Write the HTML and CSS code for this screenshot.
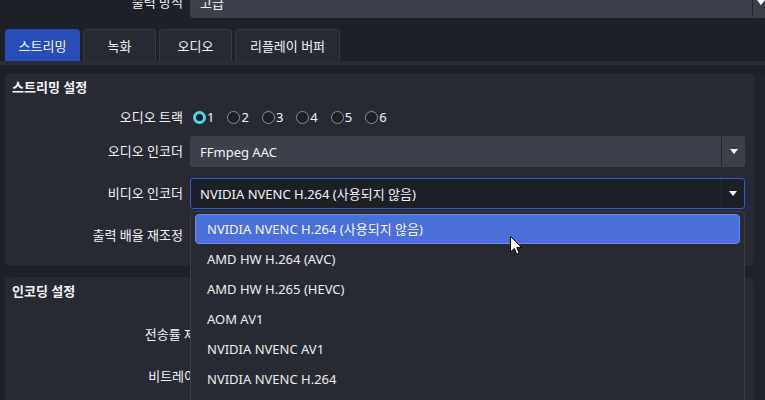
FILE: index.html
```html
<!DOCTYPE html>
<html lang="ko">
<head>
<meta charset="utf-8">
<link rel="stylesheet" href="styles.css">
</head>
<body>
<div class="page">
  <div class="top-row">
    <div class="label">출력 방식</div>
    <div class="combo combo-top"><span class="combo-text">고급</span><span class="combo-btn"><span class="arrow"></span></span></div>
  </div>
  <div class="tabs">
    <div class="tab active">스트리밍</div>
    <div class="tab">녹화</div>
    <div class="tab">오디오</div>
    <div class="tab wide">리플레이 버퍼</div>
  </div>
  <div class="tab-line"></div>
  <div class="content">
    <div class="panels">
      <div class="panel p1">
        <div class="panel-title">스트리밍 설정</div>
        <div class="row radio-row">
          <div class="label">오디오 트랙</div>
          <div class="radios">
            <span class="radio checked"></span><span class="rnum">1</span>
            <span class="radio"></span><span class="rnum">2</span>
            <span class="radio"></span><span class="rnum">3</span>
            <span class="radio"></span><span class="rnum">4</span>
            <span class="radio"></span><span class="rnum">5</span>
            <span class="radio"></span><span class="rnum">6</span>
          </div>
        </div>
        <div class="row">
          <div class="label">오디오 인코더</div>
          <div class="combo"><span class="combo-text">FFmpeg AAC</span><span class="combo-btn"><span class="arrow"></span></span></div>
        </div>
        <div class="row">
          <div class="label">비디오 인코더</div>
          <div class="combo focused"><span class="combo-text">NVIDIA NVENC H.264 (사용되지 않음)</span><span class="combo-btn"><span class="arrow"></span></span></div>
        </div>
        <div class="row">
          <div class="label">출력 배율 재조정</div>
          <div class="combo"><span class="combo-text"></span></div>
        </div>
      </div>
      <div class="panel p2">
        <div class="panel-title">인코딩 설정</div>
        <div class="row first">
          <div class="label">전송률 제어</div>
          <div class="combo"><span class="combo-text"></span></div>
        </div>
        <div class="row">
          <div class="label">비트레이트</div>
          <div class="combo"><span class="combo-text"></span></div>
        </div>
      </div>
    </div>
    <div class="scrollbar"></div>
  </div>

  <div class="popup">
    <div class="item selected">NVIDIA NVENC H.264 (사용되지 않음)</div>
    <div class="item">AMD HW H.264 (AVC)</div>
    <div class="item">AMD HW H.265 (HEVC)</div>
    <div class="item">AOM AV1</div>
    <div class="item">NVIDIA NVENC AV1</div>
    <div class="item">NVIDIA NVENC H.264</div>
    <div class="item">NVIDIA NVENC H.265</div>
  </div>

  <svg class="cursor" width="13" height="20" viewBox="0 0 13 20">
    <path d="M0.5 0.5 L0.5 16 L4.3 12.4 L6.8 18.3 L9.2 17.3 L6.8 11.6 L11.8 11.6 Z" fill="#ffffff" stroke="#000000" stroke-width="1" stroke-linejoin="miter"/>
  </svg>
</div>
</body>
</html>
```
FILE: styles.css
```css
* { box-sizing: border-box; }
html, body { margin: 0; padding: 0; }
body {
  background: #1e2028;
  font-family: "Noto Sans", "Noto Sans CJK KR", sans-serif;
  font-size: 13px;
  color: #f4f4f6;
}
.page {
  width: 765px;
  height: 400px;
  overflow: hidden;
  position: relative;
}
.label {
  width: 183px;
  flex: none;
  text-align: right;
  line-height: 31px;
  white-space: nowrap;
}
.top-row {
  display: flex;
  margin-top: -13px;
  height: 31px;
  gap: 7px;
}
.combo {
  flex: none;
  width: 555px;
  height: 31px;
  background: #3c404b;
  border-radius: 3px;
  display: flex;
  align-items: center;
  position: relative;
}
.combo-top {
  flex: 1;
  width: auto;
  border-radius: 0 0 0 4px;
}
.combo-text {
  flex: 1;
  padding-left: 10px;
  white-space: nowrap;
  overflow: hidden;
}
.combo-btn {
  width: 24px;
  height: 29px;
  border-left: 1px solid #24262e;
  display: flex;
  align-items: center;
  justify-content: center;
}
.combo-top .combo-btn { width: 13px; justify-content: flex-end; }
.arrow {
  width: 0;
  height: 0;
  border-left: 4.5px solid transparent;
  border-right: 4.5px solid transparent;
  border-top: 5px solid #ffffff;
}
.combo.focused {
  background: #1d1f27;
  border: 1px solid #2f5bd6;
}
.combo.focused .combo-text { padding-left: 9px; }

.tabs {
  display: flex;
  gap: 3px;
  margin-top: 11px;
  padding-left: 5px;
  height: 32px;
}
.tab {
  width: 73px;
  height: 32px;
  background: #272a33;
  border: 1px solid #363943;
  border-bottom: none;
  border-radius: 4px 4px 0 0;
  display: flex;
  align-items: center;
  justify-content: center;
  white-space: nowrap;
}
.tab.active {
  width: 75px;
  background: #284cb8;
  border-color: #284cb8;
}
.tab.wide { width: 105px; }
.tab-line {
  height: 4px;
  background: #2a2d37;
}
.content {
  display: flex;
  margin-top: 9px;
}
.panels {
  margin-left: 5px;
  width: 749px;
  flex: none;
}
.scrollbar {
  flex: 1;
  background: #21232b;
  height: 330px;
}
.panel {
  background: #272a33;
  border-radius: 4px;
}
.p1 { height: 192px; padding-bottom: 15px; }
.p2 { margin-top: 11px; height: 200px; }
.panel-title {
  font-weight: 700;
  padding-left: 7px;
  height: 27px;
  line-height: 27px;
}
.p2 .panel-title { height: 28px; line-height: 28px; }
.row {
  display: flex;
  gap: 7px;
  margin-top: 11px;
  height: 31px;
}
.p2 .row.first { margin-top: 14px; }
.p1 .label { width: 178px; }
.p2 .label { width: 203px; }
.p2 .combo { width: 530px; }
.radio-row {
  margin-top: 4px;
  height: 24px;
  margin-bottom: -4px;
}
.radio-row .label { line-height: 24px; }
.radios {
  display: flex;
  align-items: center;
  height: 24px;
  padding-left: 3px;
}
.radio {
  width: 13px;
  height: 13px;
  border-radius: 50%;
  border: 1px solid #8d9099;
  background: #1d1f27;
  flex: none;
}
.radio.checked {
  border: 3px solid #52d4f0;
  background: #1d1f27;
}
.rnum {
  margin-left: 1px;
  margin-right: 13px;
  line-height: 24px;
}
.popup {
  position: absolute;
  left: 190px;
  top: 211px;
  width: 555px;
  height: 200px;
  background: #272a33;
  border: 1px solid #3a3d48;
  border-radius: 4px 4px 0 0;
  padding: 2px 4px 0 4px;
}
.item {
  height: 30px;
  line-height: 30px;
  padding-left: 12px;
  white-space: nowrap;
  color: #eeeeee;
}
.item.selected {
  background: #4a6fd9;
  border: 1px solid #6e8ee6;
  border-radius: 4px;
  line-height: 28px;
  padding-left: 11px;
  color: #f4f6fb;
}
.cursor {
  position: absolute;
  left: 510px;
  top: 236px;
}
```
